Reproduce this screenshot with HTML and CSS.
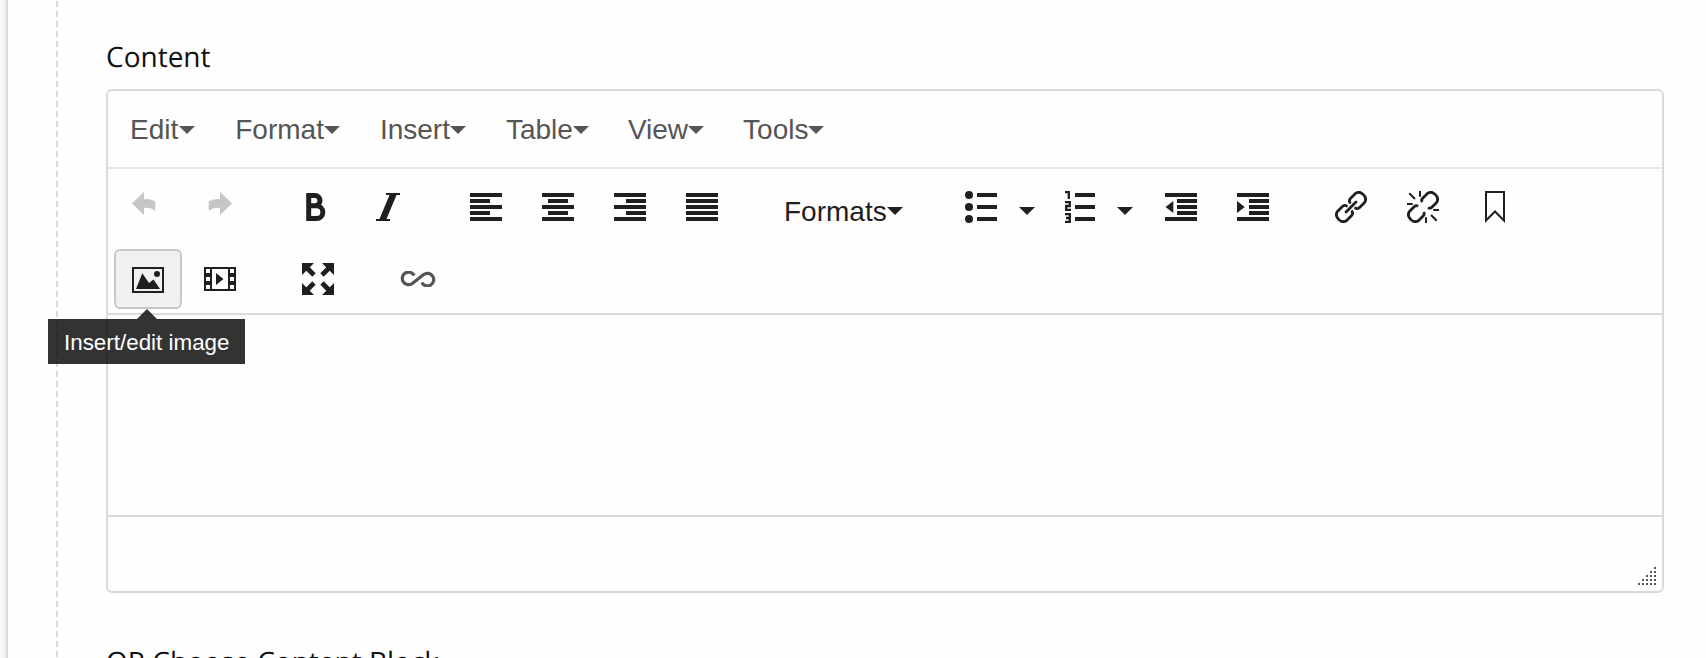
FILE: index.html
```html
<!DOCTYPE html>
<html lang="en">
<head>
<meta charset="utf-8">
<title>Content editor</title>
<link rel="stylesheet" href="styles.css">
</head>
<body>
<div class="panel">
  <div class="fieldset">
    <div class="label">Content</div>
    <div class="editor">
      <div class="menubar">
        <div class="menu menu-edit">Edit<i class="caret"></i></div>
        <div class="menu">Format<i class="caret"></i></div>
        <div class="menu">Insert<i class="caret"></i></div>
        <div class="menu menu-table">Table<i class="caret"></i></div>
        <div class="menu menu-view">View<i class="caret"></i></div>
        <div class="menu">Tools<i class="caret"></i></div>
      </div>
      <div class="toolbar">
        <div class="row row-first">
          <div class="group disabled">
            <div class="btn"><svg class="icon" viewBox="0 0 32 32"><path d="M2 12.500 14 .7V8.200Q21 7.200 25.300 10.500V20Q22 16.300 14 16.700V24Z"/></svg></div>
            <div class="btn"><svg class="icon" viewBox="0 0 32 32"><path d="M30 12.500 18 .7V8.200Q11 7.200 6.700 10.500V20Q10 16.300 18 16.700V24Z"/></svg></div>
          </div>
          <div class="group">
            <div class="btn"><svg class="icon line" viewBox="0 0 32 32" stroke-width="5"><path d="M8.700 4.500H15.500A5.200 5.200 0 0 1 15.500 14.800H9H16.500A6.300 6.300 0 0 1 16.500 27.500H8.700Z" stroke-linejoin="miter"/></svg></div>
            <div class="btn"><svg class="icon" viewBox="0 0 32 32"><path d="M14 2H28V4H24.500L14.500 28H18V30H4V28H7.500L17.500 4H14Z"/></svg></div>
          </div>
          <div class="group">
            <div class="btn"><svg class="icon" viewBox="0 0 32 32"><path d="M0 2h32v4H0zM0 8h20v4H0zM0 14h32v4H0zM0 20h20v4H0zM0 26h32v4H0z"/></svg></div>
            <div class="btn"><svg class="icon" viewBox="0 0 32 32"><path d="M0 2h32v4H0zM6 8h20v4H6zM0 14h32v4H0zM6 20h20v4H6zM0 26h32v4H0z"/></svg></div>
            <div class="btn"><svg class="icon" viewBox="0 0 32 32"><path d="M0 2h32v4H0zM12 8h20v4H12zM0 14h32v4H0zM12 20h20v4H12zM0 26h32v4H0z"/></svg></div>
            <div class="btn"><svg class="icon" viewBox="0 0 32 32"><path d="M0 2h32v4H0zM0 8h32v4H0zM0 14h32v4H0zM0 20h32v4H0zM0 26h32v4H0z"/></svg></div>
          </div>
          <div class="group">
            <div class="formats"><span class="formats-text">Formats</span><i class="caret"></i></div>
          </div>
          <div class="group">
            <div class="split"><div class="btn"><svg class="icon" viewBox="0 0 32 32"><circle cx="4" cy="4" r="4"/><circle cx="4" cy="16" r="4"/><circle cx="4" cy="28" r="4"/><path d="M12 2h20v4H12zM12 14h20v4H12zM12 26h20v4H12z"/></svg></div><i class="caret"></i></div>
            <div class="split split-num"><div class="btn"><svg class="icon" viewBox="0 0 32 32"><path d="M10 2h20v4H10zM10 14h20v4H10zM10 26h20v4H10z"/><path d="M0 1.200H3.800V8M0 11.200H4.800V15H1.200V18.800H6M0 23.200H4.800V30.800H0M1 27H5" fill="none" stroke="currentColor" stroke-width="2.300"/></svg></div><i class="caret"></i></div>
            <div class="btn"><svg class="icon" viewBox="0 0 32 32"><path d="M0 2h32v4H0zM12 8h20v4H12zM12 14h20v4H12zM12 20h20v4H12zM0 26h32v4H0zM8.300 10V22L.5 16z"/></svg></div>
            <div class="btn"><svg class="icon" viewBox="0 0 32 32"><path d="M0 2h32v4H0zM12 8h20v4H12zM12 14h20v4H12zM12 20h20v4H12zM0 26h32v4H0zM0 10V22L7.800 16z"/></svg></div>
          </div>
          <div class="group">
            <div class="btn"><svg class="icon line" viewBox="0 0 32 32" stroke-width="2.800"><g transform="translate(16 16) rotate(-45)"><path d="M2.500-4Q3-6.500 6-6.500H12Q17.500-6 17.500 0T12 6.500H6Q3 6.500 2.500 4M-2.500-4Q-3-6.500-6-6.500H-12Q-17.500-6-17.500 0T-12 6.500H-6Q-3 6.500-2.500 4M-7 0H7" stroke-linecap="round"/></g></svg></div>
            <div class="btn"><svg class="icon line" viewBox="0 0 32 32" stroke-width="2.800"><g transform="translate(16 16) rotate(-45)"><path d="M3-4Q3.500-6.500 6-6.500H12Q17.500-6 17.500 0T12 6.500H6Q4 6.500 3 4M-3-4Q-3.500-6.500-6-6.500H-12Q-17.500-6-17.500 0T-12 6.500H-6Q-4 6.500-3 4"/></g><path d="M2.300 2.300 8 8M13 0V5.700M0 13H5.700M19 26.300V32M26.300 19H32M24 24 29.700 29.700" stroke-width="2"/></svg></div>
            <div class="btn"><svg class="icon line" viewBox="0 0 32 32" stroke-width="2"><path d="M7 1H25V29.500L16 20.500 7 29.500Z"/></svg></div>
          </div>
        </div>
        <div class="row">
          <div class="group">
            <div class="btn active"><svg class="icon" viewBox="0 0 32 32"><path d="M1 5H31V29H1Z" fill="none" stroke="currentColor" stroke-width="2"/><path d="M4 26 10.300 10.300 17 20 21.500 16.500 28 26Z"/><circle cx="25" cy="11" r="3"/></svg>
              <div class="tooltip">Insert/edit image</div>
            </div>
            <div class="btn"><svg class="icon" viewBox="0 0 32 32"><path fill-rule="evenodd" d="M0 4H32V28H0ZM2 6V10H6V6ZM2 14V18H6V14ZM2 22V26H6V22ZM26 6V10H30V6ZM26 14V18H30V14ZM26 22V26H30V22ZM8 6V26H24V6ZM12 10 19.500 16 12 22Z"/></svg></div>
          </div>
          <div class="group">
            <div class="btn"><svg class="icon" viewBox="0 0 32 32"><path d="M0 0H12L0 12ZM32 0V12L20 0ZM0 32V20L12 32ZM32 32H20L32 20Z"/><path d="M4 4 12 12M28 4 20 12M4 28 12 20M28 28 20 20" stroke="currentColor" stroke-width="4.800"/></svg></div>
          </div>
          <div class="group">
            <div class="btn wide"><svg class="infinity" viewBox="0 0 36 16"><path d="M14.200 4.500A6.300 6.300 0 1 0 12.300 12.500L23.700 3.500A6.300 6.300 0 1 1 21.800 11.500"/></svg></div>
          </div>
        </div>
      </div>
      <div class="editarea"></div>
      <div class="statusbar"><svg class="resize" viewBox="0 0 18 18"><path d="M16 0h2v2h-2zM12 4h2v2h-2zM16 4h2v2h-2zM8 8h2v2H8zM12 8h2v2h-2zM16 8h2v2h-2zM4 12h2v2H4zM8 12h2v2H8zM12 12h2v2h-2zM16 12h2v2h-2zM0 16h2v2H0zM4 16h2v2H4zM8 16h2v2H8zM12 16h2v2h-2zM16 16h2v2h-2z"/></svg></div>
    </div>
    <div class="label label-next">OR Choose Content Block</div>
  </div>
</div>
</body>
</html>
```
FILE: styles.css
```css
* { box-sizing: border-box; }
body {
  margin: 0;
  height: 658px;
  overflow: hidden;
  padding-left: 6px;
  background: linear-gradient(to right, #fafafb, #eeeff1 6px, #fff 6px);
  font-family: "Liberation Sans", Arial, sans-serif;
  color: #1f1f1f;
}
.panel {
  height: 658px;
  border-left: 2px solid #d5dbdf;
  background: #fefefe;
  padding-left: 48px;
}
.fieldset {
  height: 658px;
  padding: 36px 42px 0 50px;
  background: repeating-linear-gradient(to bottom, #d5dbdf 0 6px, transparent 6px 10px) 0 -9px / 2px 700px no-repeat;
}
.label {
  height: 53px;
  padding-top: 1px;
  font: 28px/40px "Open Sans", "Noto Sans", sans-serif;
  color: #111;
  text-rendering: geometricPrecision;
}
.label-next { padding-top: 49px; white-space: nowrap; }
.editor {
  height: 504px;
  border: 2px solid #d5dbdf;
  border-radius: 6px;
  display: flex;
  flex-direction: column;
}
.menubar {
  height: 78px;
  padding: 0 2px;
  border-bottom: 2px solid #e4e7e9;
  display: flex;
  flex: none;
}
.menu {
  display: flex;
  align-items: center;
  padding: 2px 20px 0;
  font-size: 28px;
  line-height: 74px;
  color: #555;
}
.menu-edit { margin-right: 1px; }
.menu-table, .menu-view { margin-right: -1px; }
.menu .caret { margin-bottom: 1px; }
.menu-edit .caret { margin-left: 1px; margin-right: -1px; }
.caret {
  flex: none;
  width: 0;
  height: 0;
  border: 8px solid transparent;
  border-top-color: currentColor;
  border-bottom: 0;
}
.toolbar {
  height: 146px;
  flex: none;
  padding: 8px 0 0 6px;
  border-bottom: 2px solid #d5dbdf;
  display: flex;
  flex-direction: column;
  gap: 12px;
}
.row { display: flex; gap: 30px; }
.row-first { margin-left: -2px; }
.group { display: flex; gap: 4px; }
.disabled { color: #c6c6c6; }
.btn {
  position: relative;
  width: 68px;
  height: 60px;
  border: 2px solid transparent;
  border-radius: 6px;
  display: flex;
  align-items: center;
  justify-content: center;
}
.wide { width: 72px; }
.active { background: #f0f0f0; border-color: #c8c8c8; }
.icon { width: 32px; height: 32px; fill: currentColor; display: block; }
.line { fill: none; stroke: currentColor; }
.infinity { width: 36px; height: 16px; fill: none; stroke: #555; stroke-width: 3.2; }
.formats {
  width: 151px;
  padding: 8px 0 0 18px;
  display: flex;
  align-items: center;
  font-size: 28px;
  line-height: 32px;
}
.formats-text { padding-top: 2px; }
.split { width: 96px; display: flex; align-items: center; }
.split .caret { margin: 8px 0 0 4px; }
.split-num .caret { margin-left: 2px; }
.tooltip {
  position: absolute;
  z-index: 2;
  left: -68px;
  top: 68px;
  width: 197px;
  height: 45px;
  padding-left: 16px;
  background: rgba(0, 0, 0, .8);
  color: #fff;
  font-size: 22.4px;
  line-height: 47px;
  white-space: nowrap;
}
.tooltip::before {
  content: "";
  position: absolute;
  left: 89px;
  top: -10px;
  border: 10px solid transparent;
  border-top: 0;
  border-bottom-color: rgba(0, 0, 0, .8);
}
.editarea { flex: none; height: 200px; }
.statusbar {
  flex: 1;
  border-top: 2px solid #d5dbdf;
  display: flex;
  justify-content: flex-end;
  align-items: flex-end;
  padding: 0 6px 6px 0;
}
.resize { width: 18px; height: 18px; fill: #555; }
```
